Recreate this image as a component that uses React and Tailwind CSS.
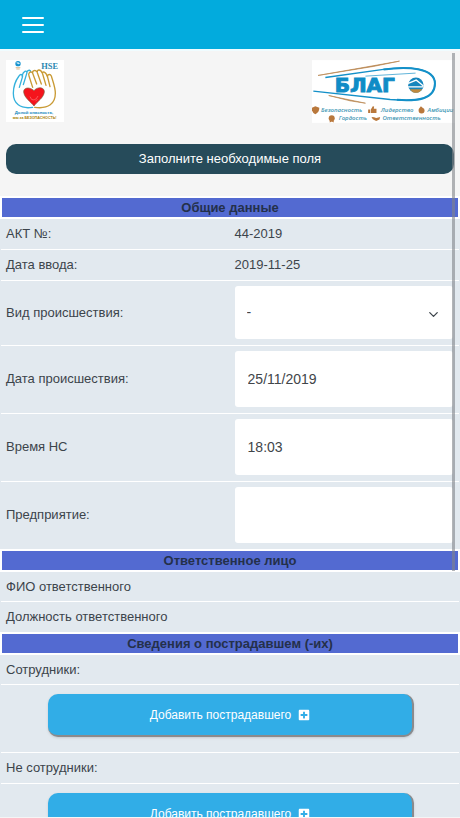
import { FaPlusSquare } from 'react-icons/fa';
import { FiChevronDown } from 'react-icons/fi';

const HseLogo = () => (
  <svg viewBox="18 180 174 186" className="h-[62px] w-[58px] shrink-0" role="img" aria-label="HSE">
    <rect x="18" y="180" width="174" height="186" fill="#fff" />
    <circle cx="54" cy="191" r="8" fill="#1593cf" />
    <path d="M48 188q7-4 12 3l-5 2z" fill="#cfeaf7" />
    <path d="M47 203h14M49 207h10" stroke="#c99a5a" strokeWidth="2" />
    <text x="124" y="206" fontFamily="Liberation Serif, serif" fontWeight="700" fontSize="25" fill="#2a86b0">
      HSE
    </text>
    <g fill="none" strokeWidth="4" strokeLinecap="round" strokeLinejoin="round">
      <path
        d="M98 322C60 328 40 310 40 280C40 262 48 240 57 228C62 220 70 224 67 232L58 262M66 228C70 212 80 210 81 218L70 254M80 216C86 208 92 210 92 216"
        stroke="#35b1dc"
      />
      <path
        d="M104 322C146 328 166 310 166 280C166 262 160 248 154 228C150 220 140 224 143 232L150 260M142 230C138 214 126 212 128 222L138 256M127 220C122 206 110 208 112 218L124 252M111 216C106 208 96 212 98 220L110 252M97 218C90 212 84 220 87 228L98 262"
        stroke="#c99a34"
      />
    </g>
    <path
      d="M102 318c-9-12-29-24-31-42-1-13 17-17 31-4 12-14 32-10 31 4-2 18-22 29-31 42z"
      fill="#f5141c"
      stroke="#7c5c3c"
      strokeWidth="2"
    />
    <path d="M90 290q4 12 12 10t12-12M106 304l6-6" fill="none" stroke="#ff9a9a" strokeWidth="1.5" />
    <text x="102" y="342" textAnchor="middle" fontFamily="Liberation Sans, sans-serif" fontWeight="700" fontSize="13" fill="#1387bd">
      Долой опасность,
    </text>
    <text x="104" y="357" textAnchor="middle" fontFamily="Liberation Sans, sans-serif" fontWeight="700" fontSize="11" fill="#a87c00">
      мы за БЕЗОПАСНОСТЬ!
    </text>
  </svg>
);

const BlagoLogo = () => (
  <svg viewBox="36 28 428 188" className="h-[63px] w-[143px] shrink-0" role="img" aria-label="БЛАГО">
    <rect x="36" y="28" width="428" height="188" fill="#fff" />
    <path d="M54 74L298 31L220 47z" fill="#b98550" stroke="#b98550" strokeWidth="2" />
    <path d="M86 134L196 157L150 150z" fill="#b98550" stroke="#b98550" strokeWidth="2" />
    <path d="M76 80L250 56C320 46 404 50 404 98C404 150 340 152 270 146L40 121" fill="none" stroke="#1490c8" strokeWidth="4" />
    <path d="M250 56C320 46 404 50 404 98C404 146 350 151 290 147" fill="none" stroke="#1490c8" strokeWidth="6" />
    <path d="M196 76L346 67" stroke="#1490c8" strokeWidth="2" />
    <text x="104" y="124" fontFamily="DejaVu Sans, sans-serif" fontWeight="700" fontSize="60" fill="#0f8cc6" stroke="#0f8cc6" strokeWidth="3">
      БЛАГ
    </text>
    <circle cx="347" cy="103" r="23" fill="#1686bd" />
    <path d="M324 98l24-10 10 8 12 10M324 108h44" fill="none" stroke="#fff" strokeWidth="4" />
    <path d="M329 115h37q-8 11-19 11t-18-11z" fill="#c08a3e" />
    <g fill="#b9783c">
      <path d="M35 171l11-5 12 5q0 14-12 19-11-5-11-19z" />
      <path d="M204 176h6v10h-6zM212 176l6-10 4 1-1 7h8v12h-17z" />
      <path d="M362 166l5 5q6 2 6 8a9 9 0 0 1-18 0q0-6 7-13z" />
      <circle cx="95" cy="202" r="9" />
      <path d="M89 208h12v7l-6-3-6 3z" />
      <path d="M214 198l8 1 6 2 12-3-2 8-10 4-10-5z" />
    </g>
    <g fontFamily="Open Sans, sans-serif" fontStyle="italic" fontWeight="600" fontSize="18" fill="#3f98b5">
      <text x="63" y="184">Безопасность</text>
      <text x="242" y="184">Лидерство</text>
      <text x="382" y="184">Амбиции</text>
      <text x="116" y="208">Гордость</text>
      <text x="247" y="208">Ответственность</text>
    </g>
  </svg>
);

const SectionRow = ({ children }) => (
  <tr className="border-y-2 border-white">
    <th colSpan={2} className="border-x-2 border-white bg-[#536ad1] p-0 text-center leading-[19px] font-bold text-[#24304a]">
      {children}
    </th>
  </tr>
);

const TextRow = ({ label, value }) => (
  <tr className="border-b border-white">
    <td className="h-[31px] py-0 pl-[5px]">{label}</td>
    <td className="py-0">{value}</td>
  </tr>
);

const FieldRow = ({ id, label, children }) => (
  <tr className="border-b border-white">
    <td className="pl-[5px]">
      <label htmlFor={id}>{label}</label>
    </td>
    <td className="pt-[5px] pr-[6px] pb-[6px]">{children}</td>
  </tr>
);

const AddRow = () => (
  <tr className="border-b border-white">
    <td colSpan={2} className="pt-[9px] pr-[45px] pb-[15px] pl-[47px]">
      <button
        type="button"
        className="flex h-[43px] w-full items-center justify-center gap-[7px] rounded-[10px] border-r-2 border-b-2 border-[#8a8a8c] bg-[#31ade7] text-xs text-white shadow-sm"
      >
        Добавить пострадавшего
        <FaPlusSquare size={12} />
      </button>
    </td>
  </tr>
);

const inputClass = 'block h-14 w-full rounded-[3px] bg-white px-[13px] text-sm text-[#414549] outline-none';

export default function App() {
  return (
    <div className="relative flex h-screen flex-col overflow-hidden border-b border-[#f5f5f5] bg-[#f5f5f5] font-['Liberation_Sans',Arial,sans-serif] text-[13px] text-[#3c444b]">
      <header className="flex h-[51px] shrink-0 items-center border-b-2 border-[#f0fcff] bg-[#02abdd] pl-[22px]">
        <button type="button" aria-label="Меню" className="flex flex-col gap-[5px]">
          <span className="h-[2px] w-[22px] rounded-full bg-white" />
          <span className="h-[2px] w-[22px] rounded-full bg-white" />
          <span className="h-[2px] w-[22px] rounded-full bg-white" />
        </button>
      </header>

      <main className="min-h-0 flex-1 overflow-y-auto [scrollbar-width:none]">
        <div className="flex justify-between pt-[9px] pr-[5px] pl-[6px]">
          <HseLogo />
          <BlagoLogo />
        </div>

        <div className="mx-[6px] mt-[21px] mb-[22px] rounded-[10px] bg-[#264b5a] text-center leading-[30px] text-white">
          Заполните необходимые поля
        </div>

        <table className="w-full table-fixed border-collapse bg-[#e2e9ef]">
          <colgroup>
            <col className="w-[51%]" />
            <col />
          </colgroup>
          <tbody>
            <SectionRow>Общие данные</SectionRow>
            <TextRow label="АКТ №:" value="44-2019" />
            <TextRow label="Дата ввода:" value="2019-11-25" />
            <FieldRow id="kind" label="Вид происшествия:">
              <div className="relative">
                <select id="kind" className="block h-[53px] w-full appearance-none rounded-[3px] bg-white px-3 text-sm text-[#414549] outline-none">
                  <option>-</option>
                </select>
                <FiChevronDown size={15} className="pointer-events-none absolute top-[21px] right-3" />
              </div>
            </FieldRow>
            <FieldRow id="date" label="Дата происшествия:">
              <input id="date" type="text" defaultValue="25/11/2019" className={inputClass} />
            </FieldRow>
            <FieldRow id="time" label="Время НС">
              <input id="time" type="text" defaultValue="18:03" className={inputClass} />
            </FieldRow>
            <FieldRow id="company" label="Предприятие:">
              <input id="company" type="text" className={inputClass} />
            </FieldRow>
            <SectionRow>Ответственное лицо</SectionRow>
            <TextRow label="ФИО ответственного" />
            <TextRow label="Должность ответственного" />
            <SectionRow>Сведения о пострадавшем (-их)</SectionRow>
            <TextRow label="Сотрудники:" />
            <AddRow />
            <TextRow label="Не сотрудники:" />
            <AddRow />
          </tbody>
        </table>
      </main>

      {/* Scroll thumb */}
      <div className="absolute top-[53px] right-[5px] h-[518px] w-[3px] bg-[#808488]/60" />
    </div>
  );
}
